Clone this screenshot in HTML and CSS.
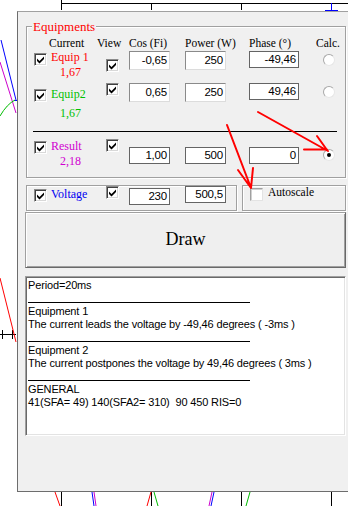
FILE: index.html
```html
<!DOCTYPE html>
<html lang="en">
<head>
    <meta charset="UTF-8">
    <meta name="viewport" content="width=device-width, initial-scale=1.0">
    <title>Phase shift</title>
    <link rel="stylesheet" href="styles.css">
</head>
<body>
    <!-- plot behind the form -->
    <svg class="graph" width="348" height="506" viewBox="0 0 348 506">
        <g stroke="#000" fill="none">
            <path d="M61 3.5H348"/>
            <path d="M61.5 0V10M151.5 3V10M241.5 3V10"/>
            <path d="M0 334.5H16M2.5 330V339M12.5 330V339"/>
            <path d="M61.5 492V506M151.5 492V506M241.5 492V506M331.5 492V506"/>
        </g>
        <g fill="none">
            <path d="M331.5 3V10M325 10.5H338" stroke="#00f"/>
            <path d="M1 40L16 100M14 100.5H17" stroke="#00f"/>
            <path d="M0 62L16 113" stroke="#c0c"/>
            <path d="M0 116Q7 104 15 100" stroke="#0b0"/>
            <path d="M0 278L16 342" stroke="#f00"/>
            <path d="M55 492L60 506M151 492L147 506" stroke="#f00"/>
            <path d="M92 492L94 506M214 492L211 506" stroke="#00f"/>
            <path d="M94 492L96 506M212 492L209 506" stroke="#c0c"/>
            <path d="M154 492L158 506M250 492L246 506" stroke="#0b0"/>
        </g>
    </svg>

    <div class="panel">
        <fieldset class="group equip">
            <legend>Equipments</legend>

            <div class="row head">
                <span></span>
                <span class="h-current">Current</span>
                <span class="h-view">View</span>
                <span>Cos (Fi)</span>
                <span>Power (W)</span>
                <span>Phase (&deg;)</span>
                <span class="h-calc">Calc.</span>
            </div>

            <div class="row r1">
                <span class="cb on"><svg width="7" height="8" viewBox="0 0 7 8"><polygon points="0,2.5 2.5,5 7,0.5 7,3 2.5,7.5 0,5"/></svg></span>
                <div class="name red">Equip 1<div class="val">1,67</div></div>
                <span class="cb on view"><svg width="7" height="8" viewBox="0 0 7 8"><polygon points="0,2.5 2.5,5 7,0.5 7,3 2.5,7.5 0,5"/></svg></span>
                <span class="fld soft w41">-0,65</span>
                <span class="fld soft w41">250</span>
                <span class="fld flat w50">-49,46</span>
                <span class="radio"></span>
            </div>

            <div class="row r2">
                <span class="cb on"><svg width="7" height="8" viewBox="0 0 7 8"><polygon points="0,2.5 2.5,5 7,0.5 7,3 2.5,7.5 0,5"/></svg></span>
                <div class="name green">Equip2<div class="val">1,67</div></div>
                <span class="cb on view"><svg width="7" height="8" viewBox="0 0 7 8"><polygon points="0,2.5 2.5,5 7,0.5 7,3 2.5,7.5 0,5"/></svg></span>
                <span class="fld soft w41">0,65</span>
                <span class="fld soft w41">250</span>
                <span class="fld flat w50">49,46</span>
                <span class="radio"></span>
            </div>

            <div class="sep"></div>

            <div class="row r3">
                <span class="cb on"><svg width="7" height="8" viewBox="0 0 7 8"><polygon points="0,2.5 2.5,5 7,0.5 7,3 2.5,7.5 0,5"/></svg></span>
                <div class="name magenta">Result<div class="val">2,18</div></div>
                <span class="cb on view"><svg width="7" height="8" viewBox="0 0 7 8"><polygon points="0,2.5 2.5,5 7,0.5 7,3 2.5,7.5 0,5"/></svg></span>
                <span class="fld flat w41">1,00</span>
                <span class="fld flat w41">500</span>
                <span class="fld flat w50">0</span>
                <span class="radio checked"></span>
            </div>
        </fieldset>

        <div class="controls">
            <div class="group volt">
                <span class="cb on"><svg width="7" height="8" viewBox="0 0 7 8"><polygon points="0,2.5 2.5,5 7,0.5 7,3 2.5,7.5 0,5"/></svg></span>
                <div class="name blue">Voltage</div>
                <span class="cb on view"><svg width="7" height="8" viewBox="0 0 7 8"><polygon points="0,2.5 2.5,5 7,0.5 7,3 2.5,7.5 0,5"/></svg></span>
                <span class="fld flat w41 v230">230</span>
                <span class="fld flat w41 v500">500,5</span>
            </div>
            <div class="group auto">
                <span class="cb"></span>
                <span class="auto-label">Autoscale</span>
            </div>
        </div>

        <div class="draw">Draw</div>

        <div class="memo">
            <div class="line">Period=20ms</div>
            <div class="rule"></div>
            <div class="line">Equipment 1</div>
            <div class="line">The current leads the voltage by -49,46 degrees ( -3ms )</div>
            <div class="rule"></div>
            <div class="line">Equipment 2</div>
            <div class="line">The current postpones the voltage by 49,46 degrees ( 3ms )</div>
            <div class="rule"></div>
            <div class="line">GENERAL</div>
            <div class="line">41(SFA= 49) 140(SFA2= 310)  90 450 RIS=0</div>
        </div>
    </div>

    <!-- annotation arrows drawn over the form -->
    <svg class="arrows" width="348" height="506" viewBox="0 0 348 506">
        <g stroke="#f00" stroke-width="2" fill="none" stroke-linecap="round">
            <path d="M258 112L328 151M304 149.5H327M317 136L327 150"/>
            <path d="M227 125L251 188M238 170L251 188M253 168L251 188"/>
        </g>
    </svg>
</body>
</html>
```

FILE: styles.css
```css
* {
    box-sizing: border-box;
}

body {
    margin: 0;
    padding: 11px 0 0 17px;
    width: 348px;
    height: 506px;
    overflow: hidden;
    position: relative;
    background: #fff;
    font-family: "Liberation Serif", "Times New Roman", serif;
    color: #000;
}

.graph,
.arrows {
    position: absolute;
    left: 0;
    top: 0;
}

.arrows {
    pointer-events: none;
}

.panel {
    position: relative;
    width: 340px;
    height: 481px;
    padding-left: 8px;
    background: #f0f0f0;
    border-left: 1px solid #6d6d6d;
    border-top: 1px solid #a0a0a0;
    border-bottom: 1px solid #6d6d6d;
}

/* etched group box */
.group {
    margin: 0;
    padding: 0;
    min-width: 0;
    border: 1px solid #a0a0a0;
    box-shadow: inset 1px 1px 0 #fff, 1px 1px 0 #fff;
}

.equip {
    margin-top: 7px;
    width: 320px;
}

.equip legend {
    margin-left: 5px;
    padding: 0 1px;
    font-size: 13px;
    line-height: 15px;
    color: #f00;
    background: #f0f0f0;
}

.row {
    display: grid;
    grid-template-columns: 17px 54px 24px 56px 64px 74px 1fr;
    align-items: start;
    padding-left: 7px;
}

.head {
    margin-top: 3px;
    height: 13px;
    font-size: 11.5px;
    line-height: 13px;
    white-space: nowrap;
}

.h-current { margin-left: -2px; }
.h-view { margin-left: -8px; }
.h-calc { margin-left: -7px; }

.r1 { height: 32px; }
.r2 { height: 49px; }
.r3 { height: 38px; }

.name {
    font-size: 12px;
    line-height: 15px;
    white-space: nowrap;
}

.name .val {
    padding-left: 9px;
}

.red { color: #f00; }
.green { color: #00c000; }
.magenta { color: #d000d0; }
.blue { color: #0000f0; }

/* checkbox */
.cb {
    width: 13px;
    height: 13px;
    display: flex;
    align-items: center;
    justify-content: center;
    background: #fff;
    border: 1px solid;
    border-color: #8a8a8a #fff #fff #8a8a8a;
    box-shadow: inset 1px 1px 0 #404040, inset -1px -1px 0 #d8d8d8;
}

.cb svg {
    display: block;
    fill: #000;
}

.cb.view {
    margin-left: 1px;
}

/* edit fields */
.fld {
    display: block;
    height: 17px;
    padding-right: 2px;
    background: #fff;
    text-align: right;
    font-family: "Liberation Sans", Arial, sans-serif;
    font-size: 11.5px;
    letter-spacing: -0.2px;
    line-height: 15px;
    border: 1px solid #646464;
}

.fld.soft {
    height: 19px;
    line-height: 17px;
    border-color: #8a8a8a #dcdcdc #dcdcdc #8a8a8a;
}

.w41 { width: 41px; }
.w50 { width: 50px; }

.radio {
    display: block;
    width: 12px;
    height: 12px;
    border-radius: 50%;
    background: #fff;
    border: 1px solid;
    border-color: #a8a8a8 #e6e6e6 #e6e6e6 #a8a8a8;
    position: relative;
}

.radio.checked::after {
    content: "";
    position: absolute;
    left: 3px;
    top: 3px;
    width: 4px;
    height: 4px;
    border-radius: 50%;
    background: #000;
}

/* row offsets */
.r1 .cb { margin-top: 3px; }
.r1 .cb.view { margin-top: 9px; }
.r1 .fld { margin-top: 1px; }
.r1 .radio { margin-top: 4px; }

.r2 .cb { margin-top: 7px; }
.r2 .cb.view { margin-top: 1px; }
.r2 .name { margin-top: 5px; }
.r2 .name .val { margin-top: 4px; }
.r2 .fld { margin-top: 1px; }
.r2 .radio { margin-top: 4px; }

.sep {
    margin: 0 0 7px 6px;
    width: 304px;
    height: 1px;
    background: #000;
}

.r3 .cb { margin-top: 2px; }
.r3 .cb.view { margin-top: 0; }
.r3 .fld { margin-top: 8px; }
.r3 .radio { margin-top: 10px; }

/* voltage + autoscale */
.controls {
    display: flex;
    gap: 5px;
    margin-top: 7px;
}

.volt {
    width: 211px;
    height: 26px;
    padding-left: 7px;
    display: grid;
    grid-template-columns: 17px 54px 24px 56px 1fr;
    align-items: start;
}

.volt .cb { margin-top: 3px; }
.volt .cb.view { margin-top: 0; }
.volt .name { margin-top: 1px; }
.v230 { margin-top: 2px; }
.v500 { margin-top: 0; }

.auto {
    width: 104px;
    height: 26px;
    padding-left: 7px;
    display: flex;
    align-items: flex-start;
}

.auto .cb {
    margin-top: 2px;
    border-color: #a0a0a0 #e3e3e3 #e3e3e3 #a0a0a0;
    box-shadow: inset 1px 1px 0 #d0d0d0;
}

.auto-label {
    margin: 0 0 0 5px;
    font-size: 11.5px;
    line-height: 13px;
}

.draw {
    margin: 1px 0 0 -1px;
    width: 321px;
    height: 56px;
    padding-bottom: 2px;
    display: flex;
    align-items: center;
    justify-content: center;
    font-size: 18px;
    background: #efefef;
    border: 1px solid;
    border-color: #a0a0a0 #696969 #696969 #a0a0a0;
    box-shadow: inset 1px 1px 0 #fff, inset -1px -1px 0 #a0a0a0;
}

.memo {
    margin: 8px 0 0 -1px;
    width: 321px;
    height: 160px;
    padding: 2px 0 0 2px;
    background: #fff;
    border: 1px solid;
    border-color: #a0a0a0 #fff #fff #a0a0a0;
    box-shadow: inset 1px 1px 0 #696969, inset -1px -1px 0 #e3e3e3;
    font-family: "Liberation Sans", Arial, sans-serif;
    font-size: 11px;
    letter-spacing: -0.15px;
    line-height: 13px;
}

.memo .line {
    height: 13px;
    white-space: pre;
}

.memo .rule {
    width: 222px;
    height: 11px;
    margin-bottom: 2px;
    border-bottom: 1px solid #000;
}
```
